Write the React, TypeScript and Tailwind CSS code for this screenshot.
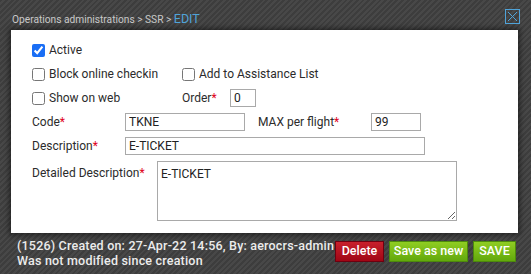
import React from "react";

const ROBOTO = "font-['Roboto','Liberation_Sans',sans-serif]";

function Req() {
  return <span className="text-[#e0001b]">*</span>;
}

function Check({ label, checked }: { label: string; checked?: boolean }) {
  return (
    <label className="flex items-center gap-[4px]">
      <input
        type="checkbox"
        defaultChecked={checked}
        className="h-[13px] w-[13px] accent-[#1a6ef5]"
      />
      <span>{label}</span>
    </label>
  );
}

const inputCls =
  "h-[18px] border border-[#a9a9a9] bg-white px-[3px] text-[12px] text-[#222] outline-none";

export default function App() {
  return (
    <div
      className={`h-[274px] w-[531px] overflow-hidden bg-[repeating-linear-gradient(135deg,#3d3d3d_0px,#3d3d3d_2px,#484848_2px,#484848_4px)] ${ROBOTO}`}
    >
      {/* header */}
      <div className="flex h-[30px] items-start justify-between pl-[12px] pr-[11px]">
        <div className="mt-[10px] flex items-baseline text-[10.2px] text-[#c9c9c9]">
          <span>Operations administrations &gt; SSR &gt;&nbsp;</span>
          <span className="text-[12.5px] text-[#4fa3d9]">EDIT</span>
        </div>
        <button className="mt-[9px] flex h-[15px] w-[15px] items-center justify-center border border-[#4fa3d9]">
          <svg width="11" height="11" viewBox="0 0 11 11">
            <path d="M1 1L10 10M10 1L1 10" stroke="#4fa3d9" strokeWidth="1" />
          </svg>
        </button>
      </div>

      {/* panel */}
      <div className="ml-[11px] h-[203px] w-[507px] bg-white pl-[21px] pt-[8px] text-[12px] text-[#2b2b2b] shadow-[0_0_5px_2px_rgba(0,0,0,0.45)]">
        <div className="flex h-6 items-center">
          <Check label="Active" checked />
        </div>
        <div className="flex h-6 items-center">
          <div className="w-[150px]">
            <Check label="Block online checkin" />
          </div>
          <Check label="Add to Assistance List" />
        </div>
        <div className="flex h-6 items-center">
          <div className="w-[150px]">
            <Check label="Show on web" />
          </div>
          <span className="w-[48px]">
            Order<Req />
          </span>
          <input className={`${inputCls} w-[26px]`} defaultValue="0" />
        </div>
        <div className="flex h-6 items-center">
          <span className="w-[93px]">
            Code<Req />
          </span>
          <input className={`${inputCls} w-[120px]`} defaultValue="TKNE" />
          <span className="ml-[13px] w-[113px]">
            MAX per flight<Req />
          </span>
          <input className={`${inputCls} w-[50px]`} defaultValue="99" />
        </div>
        <div className="flex h-6 items-center">
          <span className="w-[93px]">
            Description<Req />
          </span>
          <input className={`${inputCls} w-[300px]`} defaultValue="E-TICKET" />
        </div>
        <div className="flex pt-[3px]">
          <span className="w-[125px] pt-[3px]">
            Detailed Description<Req />
          </span>
          <textarea
            className="h-[60px] w-[300px] resize border border-[#a9a9a9] px-[3px] py-[3px] text-[12px] text-[#222] outline-none"
            defaultValue="E-TICKET"
          />
        </div>
      </div>

      {/* footer */}
      <div className="flex items-start justify-between pl-[17px] pr-[15px] pt-[5px]">
        <div className="text-[12.5px] leading-[15px] font-medium tracking-[0.2px] text-[#ececec]">
          <div>(1526) Created on: 27-Apr-22 14:56, By: aerocrs-admin</div>
          <div>Was not modified since creation</div>
        </div>
        <div className="mt-[3px] flex gap-[5px]">
          <button className="h-[21px] w-[49px] border border-[#6e0010] bg-[linear-gradient(#c8202c,#a00615)] text-[12.5px] font-medium text-white">
            Delete
          </button>
          <button className="h-[21px] w-[79px] border border-[#4d8a0c] bg-[linear-gradient(#8fcd22,#62a80c)] text-[12.5px] font-medium text-white">
            Save as new
          </button>
          <button className="h-[21px] w-[43px] border border-[#4d8a0c] bg-[linear-gradient(#8fcd22,#62a80c)] text-[12.5px] font-medium text-white">
            SAVE
          </button>
        </div>
      </div>
    </div>
  );
}
